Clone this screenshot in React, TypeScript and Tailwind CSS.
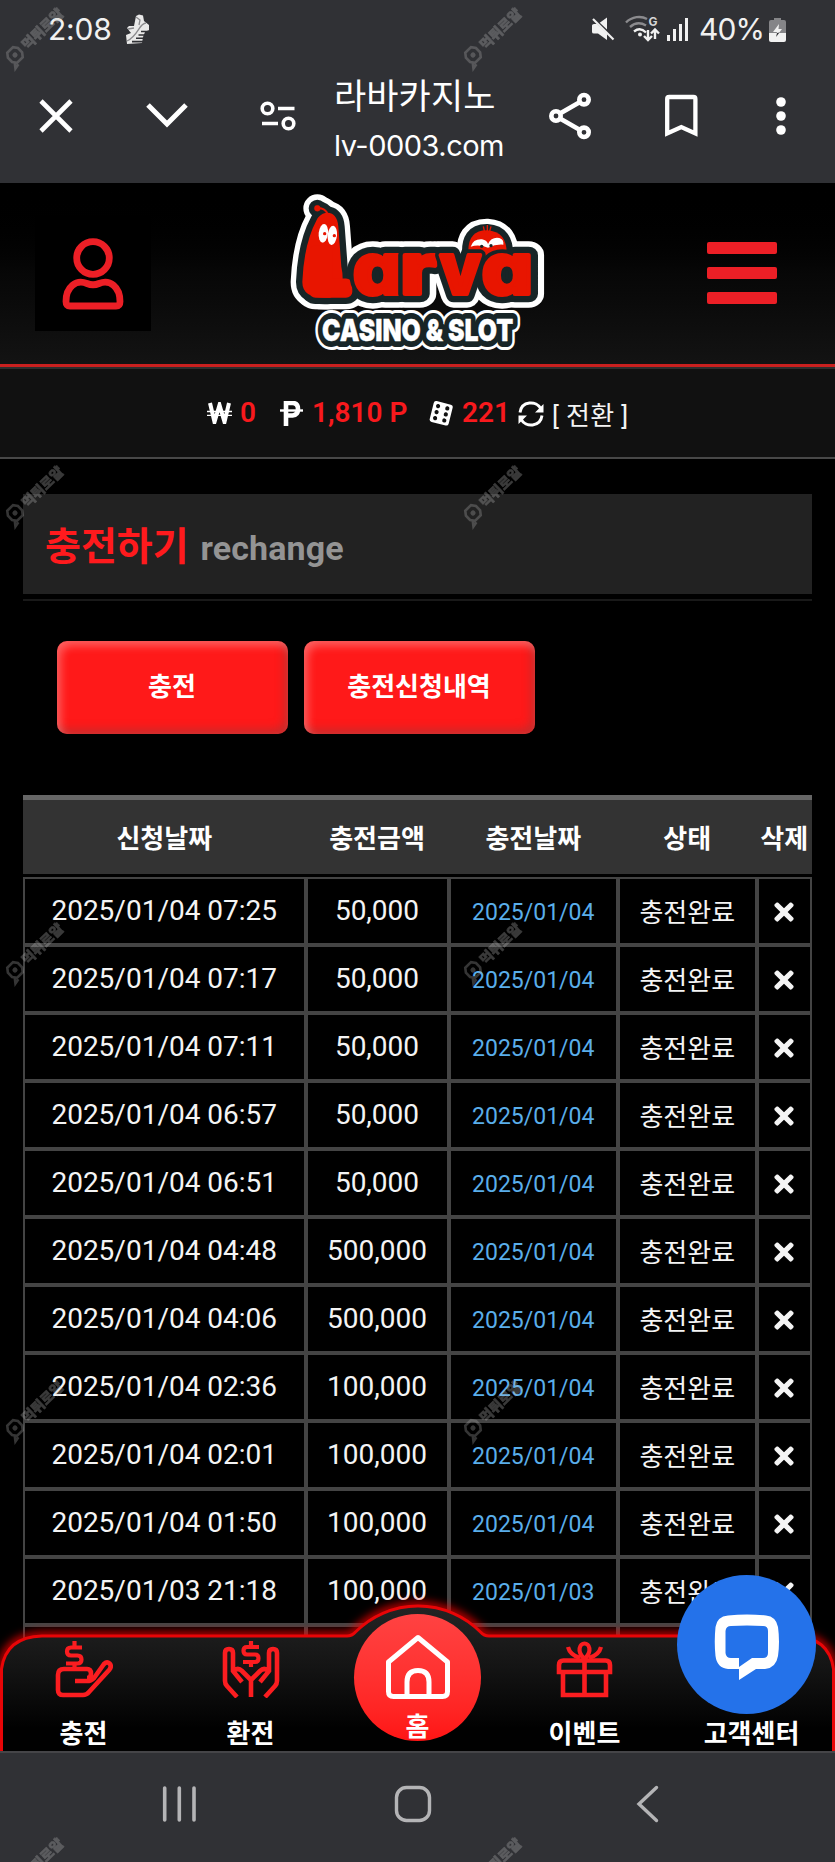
import React from "react";
import { FaTimes } from "react-icons/fa";

const ROWS: [string, string, string][] = [
  ["2025/01/04 07:25", "50,000", "2025/01/04"],
  ["2025/01/04 07:17", "50,000", "2025/01/04"],
  ["2025/01/04 07:11", "50,000", "2025/01/04"],
  ["2025/01/04 06:57", "50,000", "2025/01/04"],
  ["2025/01/04 06:51", "50,000", "2025/01/04"],
  ["2025/01/04 04:48", "500,000", "2025/01/04"],
  ["2025/01/04 04:06", "500,000", "2025/01/04"],
  ["2025/01/04 02:36", "100,000", "2025/01/04"],
  ["2025/01/04 02:01", "100,000", "2025/01/04"],
  ["2025/01/04 01:50", "100,000", "2025/01/04"],
  ["2025/01/03 21:18", "100,000", "2025/01/03"],
  ["", "", ""],
];

function StatusBar() {
  return (
    <div className="flex h-[58px] items-center pl-[48px] pr-[48px] font-['Inter','Noto_Sans_CJK_KR',sans-serif] text-[#f1f1f1]">
      <span className="w-[77px] text-[30px] leading-none tracking-[-0.2px]">2:08</span>
      <svg className="h-[32px] w-[26px]" viewBox="0 0 26 32">
        <path d="M11 3 14 1.500 18 2.500 19 8 24 12 24 17 20 19 18 24 17 30 2 31 1 22 6 20 2 15 4 13 9 13Z" fill="#e9e9e9" />
        <path d="M21 10C14 10 14 22 2 28M3 16l6-1M11 4l4 3-1 5" stroke="#8a8a8d" strokeWidth="1.300" fill="none" />
        <path d="M16 18.500h7M13.500 22h7M11 25.300h8M7 28.600h11" stroke="#303135" strokeWidth="1.600" />
      </svg>
      <div className="ml-auto flex items-center">
        <svg className="mr-[10px] h-[24px] w-[24px]" viewBox="0 0 24 24">
          <path d="M1 8.500Q1 7 3 7h4L16 .5V23L7 16.500H3Q1 16.500 1 15Z" fill="#f1f1f1" />
          <path d="M1 .5 24 22" stroke="#303135" strokeWidth="3" />
          <path d="M2 2 22.500 22.500" stroke="#f1f1f1" strokeWidth="2.200" />
        </svg>
        <svg className="mr-[7px] h-[28px] w-[35px]" viewBox="0 0 35 28">
          <g fill="none" strokeWidth="2.400">
            <path d="M1 7.500C7 1.500 16 .500 22 4M5 12c5-4.500 11-4.500 16-1.500" stroke="#8b8b8e" />
            <path d="M9 16.500c4-3 8-3 12 1" stroke="#f1f1f1" />
            <path d="M23 15v10m-4-4 4 4 4-4M30 24V14.500m-4 4 4-4 4 4" stroke="#f1f1f1" />
          </g>
          <circle cx="15" cy="19.500" r="2" fill="#f1f1f1" />
          <text x="23.500" y="10.500" fontSize="12" fontWeight="700" fill="#d6d6d6">G</text>
        </svg>
        <svg className="mr-[10px] h-[24px] w-[22px]" viewBox="0 0 22 24" fill="#f1f1f1">
          <rect x="0" y="18" width="3" height="6" />
          <rect x="6" y="12" width="3" height="12" />
          <rect x="12" y="7" width="3" height="17" />
          <rect x="18" y="1" width="3" height="23" />
        </svg>
        <span className="w-[70px] text-[30px] leading-none tracking-[-0.9px]">40%</span>
        <svg className="mr-px h-[25px] w-[17px]" viewBox="0 0 17 25">
          <path d="M5 1h7v2H5zM2 3h13q2 0 2 2v11H0V5q0-2 2-2Z" fill="#858588" />
          <path d="M0 16h17v7q0 2-2 2H2q-2 0-2-2Z" fill="#f1f1f1" />
          <path d="M10 7 4 15h4l-1 5 6-8H9.500Z" fill="#f1f1f1" />
          <path d="M8 16 7 20l3.500-4.500Z" fill="#303135" />
        </svg>
      </div>
    </div>
  );
}

function BrowserBar() {
  return (
    <div className="flex h-[125px] items-start text-white">
      <svg className="ml-[39px] mt-[41px] h-[34px] w-[34px]" viewBox="0 0 34 34" stroke="#fff" strokeWidth="4.600">
        <path d="M2 2 32 32M32 2 2 32" />
      </svg>
      <svg className="ml-[72px] mt-[44px] h-[28px] w-[44px]" viewBox="0 0 44 28" fill="none" stroke="#fff" strokeWidth="5">
        <path d="M3 3 22 22 41 3" />
      </svg>
      <svg className="ml-[71px] mt-[42px] h-[32px] w-[37px]" viewBox="0 0 37 32" fill="none" stroke="#fff" strokeWidth="3.600">
        <circle cx="7.500" cy="8.500" r="5.300" />
        <circle cx="28.500" cy="23.500" r="5.300" />
        <path d="M18 8.500H34.500M2 23.500H18" />
      </svg>
      <div className="ml-[37px] flex w-[216px] flex-col font-['Inter','Noto_Sans_CJK_KR',sans-serif]">
        <div className="mt-[18px] h-[41px] text-[35px] leading-[41px] tracking-[0.1px]">라바카지노</div>
        <div className="mt-[11px] h-[36px] text-[29px] font-normal leading-[36px] tracking-[-0.5px]">lv-0003.com</div>
      </div>
      <svg className="-ml-px mt-[34px] h-[48px] w-[44px]" viewBox="0 0 44 48" fill="none" stroke="#fff">
        <g strokeWidth="4.600">
          <circle cx="7" cy="24" r="4.700" />
          <circle cx="35" cy="7.700" r="4.700" />
          <circle cx="35" cy="40.300" r="4.700" />
          <path d="M11 21.500 31 10M11 26.500 31 38" />
        </g>
      </svg>
      <svg className="ml-[71px] mt-[36px] h-[44px] w-[36px]" viewBox="0 0 36 44" fill="none" stroke="#fff" strokeWidth="4.300">
        <path d="M3.200 39.500V5q0-2 2-2h24.200q2 0 2 2v34.500L17.300 33Z" />
      </svg>
      <svg className="ml-[75px] mt-[38px] h-[40px] w-[12px]" viewBox="0 0 12 40" fill="#fff">
        <circle cx="6" cy="6" r="4.800" />
        <circle cx="6" cy="20" r="4.800" />
        <circle cx="6" cy="34" r="4.800" />
      </svg>
    </div>
  );
}

const WORM = "M110 105C125 75 172 72 175 125Q180 190 184 245Q200 320 150 338Q66 344 67 290Q72 175 110 105Z";
const HEAD = "M566 214Q558 135 622 136Q684 140 680 214Z";

const LETTERS = [
  { char: "a", x: 219, width: 150 },
  { char: "r", x: 361, width: 108 },
  { char: "v", x: 479, width: 124 },
  { char: "a", x: 605, width: 154 },
];

function Initial({ color, stroke }: { color: string; stroke: number }) {
  return (
    <text
      x="96"
      y="320"
      fontSize="170"
      fontFamily="Inter, sans-serif"
      fontWeight="800"
      textLength="108"
      lengthAdjust="spacingAndGlyphs"
      fill={color}
      stroke={color}
      strokeWidth={stroke}
      strokeLinejoin="round"
    >
      L
    </text>
  );
}

function Letter({ index, color, stroke }: { index: number; color: string; stroke: number }) {
  const { char, x, width } = LETTERS[index];
  return (
    <text
      x={x}
      y="328"
      fontSize="212"
      fontFamily="Inter, sans-serif"
      fontWeight="800"
      textLength={width}
      lengthAdjust="spacingAndGlyphs"
      fill={color}
      stroke={color}
      strokeWidth={stroke}
      strokeLinejoin="round"
      style={{ fontFeatureSettings: '"cv11"' }}
    >
      {char}
    </text>
  );
}

function LogoOutline({ color, grow }: { color: string; grow: number }) {
  return (
    <g>
      <g fill={color} stroke={color} strokeLinejoin="round" strokeLinecap="round" strokeWidth={grow}>
        <circle cx="112" cy="70" r="7" />
        <path d="M112 70q22-4 36 22" fill="none" />
        <path d={WORM} />
        <path d={HEAD} />
      </g>
      <Initial color={color} stroke={34 + grow} />
      {LETTERS.map((_, i) => (
        <Letter key={i} index={i} color={color} stroke={12 + grow} />
      ))}
    </g>
  );
}

function Logo() {
  return (
    <svg className="h-[175px] w-[280px]" viewBox="0 0 840 525">
      <LogoOutline color="#ffffff" grow={70} />
      <LogoOutline color="#182527" grow={38} />
      <g fill="#e81500" stroke="#e81500" strokeLinejoin="round">
        <path d="M112 70q20-2 30 14" fill="none" strokeWidth="6" />
        <circle cx="112" cy="70" r="9" />
        <path d={WORM} stroke="none" />
        <path d={HEAD} stroke="none" />
        <path d="M610 124l4 18M622 120v20M633 124l-5 18" strokeWidth="4" />
      </g>
      <Initial color="#e81500" stroke={34} />
      {[0, 1, 2, 3].map((i) => (
        <g key={i}>
          <Letter index={i} color="#182527" stroke={34} />
          <Letter index={i} color="#e81500" stroke={12} />
        </g>
      ))}
      <g fill="#fff">
        <ellipse cx="130" cy="145" rx="14" ry="28" transform="rotate(6 130 145)" />
        <ellipse cx="157" cy="151" rx="14" ry="29" transform="rotate(6 157 151)" />
        <path d="M572 185q8-24 34-22 16 4 18 14 10-22 34-18 14 4 12 20-22-2-46 9-28-12-52-3Z" />
      </g>
      <circle cx="134" cy="146" r="5" fill="#e81500" />
      <circle cx="163" cy="152" r="5" fill="#e81500" />
      <circle cx="605" cy="184" r="5" fill="#182527" />
      <circle cx="633" cy="182" r="5" fill="#182527" />
      <g fontFamily="Inter, sans-serif" fontWeight="900" fontSize="90" strokeLinejoin="round">
        <text x="126" y="469" textLength="574" lengthAdjust="spacingAndGlyphs" fill="#fff" stroke="#fff" strokeWidth="54">CASINO &amp; SLOT</text>
        <text x="126" y="469" textLength="574" lengthAdjust="spacingAndGlyphs" fill="#182527" stroke="#182527" strokeWidth="36">CASINO &amp; SLOT</text>
        <text x="126" y="469" textLength="574" lengthAdjust="spacingAndGlyphs" fill="#fff" stroke="#fff" strokeWidth="1">CASINO &amp; SLOT</text>
      </g>
    </svg>
  );
}

function SiteHeader() {
  return (
    <header className="flex h-[184px] items-start border-b-[3px] border-[#c9201f] bg-linear-to-b from-black via-[#070707] to-[#131313]">
      <div className="ml-[35px] mt-[32px] flex h-[116px] w-[116px] items-center justify-center bg-black">
        <svg className="-ml-px h-[74px] w-[64px]" viewBox="0 0 64 74" fill="none" stroke="#ec1f26" strokeWidth="6.800">
          <circle cx="32" cy="22" r="16.300" />
          <path d="M9 70Q5 70 5 65.500C5 51 15 43 26 47.500Q32 50 38 47.500C49 43 59 51 59 65.500Q59 70 55 70Z" strokeLinejoin="round" />
        </svg>
      </div>
      <div className="ml-[129px] mt-[2px]">
        <Logo />
      </div>
      <div className="ml-[147px] mt-[59px] flex flex-col gap-[13px]">
        <span className="h-[12px] w-[70px] rounded-[2px] bg-[#ec1f26]" />
        <span className="h-[12px] w-[70px] rounded-[2px] bg-[#ec1f26]" />
        <span className="h-[12px] w-[70px] rounded-[2px] bg-[#ec1f26]" />
      </div>
    </header>
  );
}

function BalanceBar() {
  return (
    <div className="flex h-[92px] items-center border-b-2 border-t-2 border-b-[#484848] border-t-[#2e2e2e] bg-[#111] pl-[207px] font-['Roboto','Noto_Sans_CJK_KR',sans-serif] text-[28px] font-medium text-[#f8191d]">
      <svg className="h-[22px] w-[25px]" viewBox="0 0 25 22" stroke="#fff" fill="none">
        <path d="M3 1 7.500 20 12.500 3 17.500 20 22 1" strokeWidth="4" />
        <path d="M0 9.500H25M0 13.300H25" strokeWidth="1.300" />
      </svg>
      <span className="ml-[8px] w-[40px] font-semibold">0</span>
      <svg className="h-[25px] w-[23px]" viewBox="0 0 23 25" stroke="#fff" fill="none">
        <path d="M6 25V2h6.500q5.500 0 5.500 6t-5.500 6.500H6" strokeWidth="4.600" />
        <path d="M0 9.500H23" strokeWidth="2.400" />
      </svg>
      <span className="ml-[9px] w-[116px] font-semibold">1,810 P</span>
      <svg className="h-[26px] w-[26px]" viewBox="0 0 26 26">
        <g transform="rotate(14 13 13)">
          <rect x="3.500" y="2.500" width="19.500" height="21.500" rx="2.500" fill="#fff" />
          <g fill="#111">
            <circle cx="8.500" cy="7" r="2.100" />
            <circle cx="8.500" cy="13.200" r="2.100" />
            <circle cx="8.500" cy="19.400" r="2.100" />
            <circle cx="18" cy="7" r="2.100" />
            <circle cx="18" cy="13.200" r="2.100" />
            <circle cx="18" cy="19.400" r="2.100" />
          </g>
        </g>
      </svg>
      <span className="ml-[8px] w-[56px] font-semibold">221</span>
      <svg className="mt-[2px] h-[26px] w-[26px]" viewBox="0 0 26 26" fill="none" stroke="#fff" strokeWidth="2.900">
        <path d="M2 11.500C3.500 0 18.500-1 23 8M24 14.500C22.500 26 7.500 27 3 18" />
        <path d="M25.500 3v8.500H17ZM.500 23v-8.500H9Z" fill="#fff" stroke="none" />
      </svg>
      <span className="ml-[8px] mt-[6px] text-[26px] font-normal tracking-[0.3px] text-[#f4f4f4]">[ 전환 ]</span>
    </div>
  );
}

const BUTTON =
  "flex h-[93px] w-[231px] items-center justify-center rounded-[10px] bg-[#ff1919] pb-px text-[26px] font-bold text-white shadow-[inset_4px_5px_8px_rgba(255,255,255,0.3),inset_-4px_-5px_8px_rgba(150,60,60,0.5)]";

const COLS = "grid w-[789px] grid-cols-[282.5px_143px_169.5px_138.5px_55.5px]";
const CELL = "flex items-center justify-center border-2 border-[#444] whitespace-nowrap";

function DepositTable() {
  return (
    <section className="ml-[23px] mt-[61px] w-[789px]">
      <div className={`${COLS} h-[79px] border-t-[5px] border-[#666] bg-[#333] text-[26px] font-bold text-white`}>
        {["신청날짜", "충전금액", "충전날짜", "상태", "삭제"].map((h) => (
          <div key={h} className="flex items-center justify-center whitespace-nowrap pt-[5px]">
            {h}
          </div>
        ))}
      </div>
      <div className="mt-[3px]">
        {ROWS.map(([at, amount, day], i) => (
          <div key={i} className={`${COLS} h-[68px] text-[28px] text-[#f4f4f4]`}>
            <div className={CELL}>{at}</div>
            <div className={CELL}>{amount}</div>
            <div className={`${CELL} text-[23px] text-[#5aaeea]`}>
              <span className="pt-[4px]">{day}</span>
            </div>
            <div className={`${CELL} text-[26px]`}>
              <span className="pt-[4px]">{day && "충전완료"}</span>
            </div>
            <div className={CELL}>{day && <FaTimes className="mt-[2px] h-[28px] w-[22px]" />}</div>
          </div>
        ))}
      </div>
    </section>
  );
}

function HandCoinIcon() {
  return (
    <svg className="h-[57px] w-[58px]" viewBox="0 0 58 57" fill="none" stroke="#fb1d20" strokeWidth="4.600">
      <path d="M27 6.500H16q-4 0-4 4t4 4h6.500q4 0 4 4t-4 4H11M19.500 0v6M19.500 22v5" strokeWidth="4.200" />
      <path d="M20 40h12q4 0 7-3L49 23q3-3 5.500-.500t0 6L34 51q-2.500 3-6 3H8q-5 0-5-5V34q0-6 6-6h23q4 0 4 4.500t-4 4.500" />
    </svg>
  );
}

function HandsCoinIcon() {
  return (
    <svg className="h-[57px] w-[58px]" viewBox="0 0 58 57" fill="none" stroke="#fb1d20" strokeWidth="4.600">
      <path d="M37 6H25q-3.500 0-3.500 3.700t3.500 3.800h8q3.500 0 3.500 3.700T33 21H21M29 0v6M29 21v5" strokeWidth="4.200" />
      <path d="M15 56 5 45Q3 43 3 40V12q0-4 4-4t4 4v18l9 11M11 30q5-4 9 0l9 9v17M43 56 53 45q2-2 2-5V12q0-4-4-4t-4 4v18l-9 11M47 30q-5-4-9 0l-9 9" />
    </svg>
  );
}

function GiftIcon() {
  return (
    <svg className="h-[57px] w-[57px]" viewBox="0 0 57 57" fill="none" stroke="#fb1d20" strokeWidth="4.600">
      <path d="M3 31V24q0-4.500 4.500-4.500h42Q54 19.500 54 24v7ZM7 31V54H50V31M28.500 18V54" />
      <path d="M28.500 18C20 10 24 2.500 28.500 2.500S37 10 28.500 18ZM24 17q-10-3-12-11M33 17q10-3 12-11" strokeWidth="4.200" />
    </svg>
  );
}

const NAV_SHAPE = "M1.500 170V80Q6 48 42 47H347Q352 47 355.500 43A88 88 0 0 1 480.500 43Q484 47 489 47H793Q829 48 833.500 80V170Z";

function BottomNav() {
  return (
    <nav className="absolute bottom-[111px] left-0 h-[162px] w-[835px] text-[26px] font-bold text-white">
      <svg className="absolute inset-0 h-[162px] w-[835px]" viewBox="0 0 835 162">
        <defs>
          <linearGradient id="navFill" x1="0" y1="0" x2="0" y2="1">
            <stop offset="0" stopColor="#242424" />
            <stop offset="0.4" stopColor="#141414" />
            <stop offset="0.800" stopColor="#010101" />
          </linearGradient>
          <filter id="glow" x="-5%" y="-20%" width="110%" height="140%">
            <feGaussianBlur stdDeviation="5" />
          </filter>
        </defs>
        <path d={NAV_SHAPE} fill="none" stroke="#ff0000" strokeWidth="7" filter="url(#glow)" />
        <path d={NAV_SHAPE} fill="url(#navFill)" stroke="#e80507" strokeWidth="3" />
      </svg>
      <div className="relative grid h-[162px] grid-cols-5 pt-[52px]">
        <div className="flex flex-col items-center">
          <HandCoinIcon />
          <span className="mt-[18px] leading-[36px]">충전</span>
        </div>
        <div className="flex flex-col items-center">
          <HandsCoinIcon />
          <span className="mt-[18px] leading-[36px]">환전</span>
        </div>
        <div className="-mt-[27px] flex h-[127px] w-[127px] flex-col items-center justify-self-center rounded-full bg-linear-to-b from-[#ff4242] to-[#ff1414]">
          <svg className="mt-[20px] h-[66px] w-[66px] shrink-0" viewBox="0 0 66 66" fill="none" stroke="#fff" strokeWidth="5">
            <path d="M33 3.500 62.500 28V57.500q0 5-5 5H8.500q-5 0-5-5V28Z" strokeLinejoin="round" />
            <path d="M22 62V48q0-11.500 11-11.500T44 48V62" />
          </svg>
          <span className="mt-[12px] leading-[30px]">홈</span>
        </div>
        <div className="flex flex-col items-center">
          <GiftIcon />
          <span className="mt-[18px] leading-[36px]">이벤트</span>
        </div>
        <div className="flex flex-col items-center">
          <span className="mt-[75px] leading-[36px]">고객센터</span>
        </div>
      </div>
    </nav>
  );
}

function ChatButton() {
  return (
    <button className="absolute bottom-[148px] right-[19px] flex h-[139px] w-[139px] items-center justify-center rounded-full bg-[#2472ea]">
      <svg className="mt-[5px] h-[66px] w-[66px]" viewBox="0 0 66 66">
        <path
          fill="#fff"
          fillRule="evenodd"
          d="M14 1.500Q33-.500 52 1.500Q62 2.500 64 13Q66 28 64 42Q62 54 51 55H42L25 66V55H14Q3 54 1.500 42Q0 28 1.500 13Q3 2.500 14 1.500ZM17 12Q33 11 49 12Q54 12 54 17V39Q54 44 49 44H38L25 53V44H17Q12 44 11.500 39V17Q12 12 17 12Z"
        />
      </svg>
    </button>
  );
}

function AndroidNav() {
  return (
    <div className="flex h-[111px] border-t-2 border-[#454548] bg-[#303135]">
      <svg className="ml-[162px] mt-[33px] h-[36px] w-[34px]" viewBox="0 0 34 36" stroke="#b4b4b6" strokeWidth="3.600" strokeLinecap="round">
        <path d="M2.700 2V34M17.300 2V34M32 2V34" />
      </svg>
      <svg className="ml-[198px] mt-[32px] h-[38px] w-[38px]" viewBox="0 0 38 38">
        <rect x="2.500" y="2.500" width="33" height="33" rx="10" fill="none" stroke="#b4b4b6" strokeWidth="3.400" />
      </svg>
      <svg className="ml-[203px] mt-[32px] h-[38px] w-[24px]" viewBox="0 0 24 38" fill="none" stroke="#b4b4b6" strokeWidth="3.400" strokeLinecap="round">
        <path d="M21.500 2.500 4 19 21.500 35.500" />
      </svg>
    </div>
  );
}

function Watermark() {
  return (
    <div className="h-[457.5px] w-[427px] shrink-0 opacity-30">
      <svg className="h-[80px] w-[80px]" viewBox="0 0 80 80">
        <g transform="translate(15 55) rotate(-44)">
          <path d="M-7-3-4-7H4l3 4v6l-3 4H-4l-3-4ZM-6 6l-3 4 5-1" fill="none" stroke="#b0b0b0" strokeWidth="2.600" />
          <circle r="2.600" fill="#b0b0b0" />
          <text x="12" y="5.500" fontSize="14" fontWeight="900" fill="#c0c0c0" stroke="#c0c0c0" strokeWidth="0.500" fontFamily="'Noto Sans CJK KR', sans-serif">
            먹튀로얄
          </text>
        </g>
      </svg>
    </div>
  );
}

export default function App() {
  return (
    <div className="relative flex h-[1862px] w-[835px] flex-col overflow-hidden bg-black font-['Roboto','Noto_Sans_CJK_KR',sans-serif]">
      <div className="h-[183px] shrink-0 bg-[#303135]">
        <StatusBar />
        <BrowserBar />
      </div>
      <main className="h-[1568px] shrink-0 overflow-hidden">
        <SiteHeader />
        <BalanceBar />
        <div className="ml-[23px] mt-[35px] w-[789px] border-b-2 border-[#191919] pb-[5px]">
          <h1 className="flex h-[100px] items-baseline bg-[#222] pl-[22px] pt-[25px] text-[39px] font-bold leading-[56px] text-[#ff1a1d]">
            충전하기
            <small className="ml-[12px] text-[34px] font-bold tracking-[0.1px] text-[#949494]">rechange</small>
          </h1>
        </div>
        <div className="ml-[56.5px] mt-[40px] flex gap-[16px]">
          <button className={BUTTON}>충전</button>
          <button className={BUTTON}>충전신청내역</button>
        </div>
        <DepositTable />
      </main>
      <BottomNav />
      <ChatButton />
      <AndroidNav />
      <div className="pointer-events-none absolute inset-0 overflow-hidden">
        {[0, 1, 2, 3, 4].map((r) => (
          <div key={r} className="flex w-[835px] gap-[30.5px] overflow-hidden">
            <Watermark />
            <Watermark />
          </div>
        ))}
      </div>
    </div>
  );
}
